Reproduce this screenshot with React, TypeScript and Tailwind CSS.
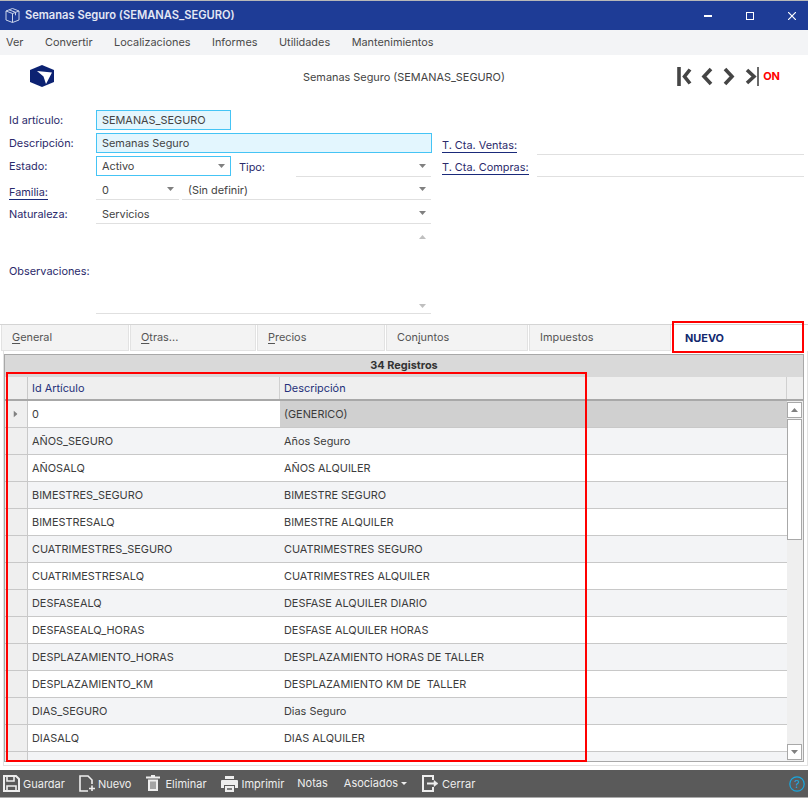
import React from "react";

// Rows of the articles grid
const rows: [string, string][] = [
  ["0", "(GENERICO)"],
  ["AÑOS_SEGURO", "Años Seguro"],
  ["AÑOSALQ", "AÑOS ALQUILER"],
  ["BIMESTRES_SEGURO", "BIMESTRE SEGURO"],
  ["BIMESTRESALQ", "BIMESTRE ALQUILER"],
  ["CUATRIMESTRES_SEGURO", "CUATRIMESTRES SEGURO"],
  ["CUATRIMESTRESALQ", "CUATRIMESTRES ALQUILER"],
  ["DESFASEALQ", "DESFASE ALQUILER DIARIO"],
  ["DESFASEALQ_HORAS", "DESFASE ALQUILER HORAS"],
  ["DESPLAZAMIENTO_HORAS", "DESPLAZAMIENTO HORAS DE TALLER"],
  ["DESPLAZAMIENTO_KM", "DESPLAZAMIENTO KM DE  TALLER"],
  ["DIAS_SEGURO", "Dias Seguro"],
  ["DIASALQ", "DIAS ALQUILER"],
];

const menu = ["Ver", "Convertir", "Localizaciones", "Informes", "Utilidades", "Mantenimientos"];

const Caret = ({ className = "" }: { className?: string }) => (
  <svg width="7" height="4" viewBox="0 0 7 4" className={className}>
    <path d="M0 0h7L3.5 4z" fill="#808080" />
  </svg>
);

// Borderless select with a grey underline
const Select = ({ value, className }: { value?: string; className: string }) => (
  <div className={`flex h-[21px] items-center justify-between border-b border-[#e0e0e0] pl-[6px] pr-[5px] pt-[2px] ${className}`}>
    <span>{value}</span>
    <Caret className="-mt-[2px]" />
  </div>
);

const Label = ({ children, link }: { children: React.ReactNode; link?: boolean }) => (
  <span className={`text-[#2b2a6b] ${link ? "border-b border-[#1a2a7a] leading-[13px]" : ""}`}>{children}</span>
);

const Tab = ({ width, children }: { width: string; children: React.ReactNode }) => (
  <div className={`flex h-[26px] items-center border-x border-b border-[#e2e2e2] bg-[#f3f3f3] pl-[10px] text-[#555] ${width}`}>{children}</div>
);

const ToolButton = ({ icon, label, className }: { icon?: React.ReactNode; label: string; className: string }) => (
  <div className={`flex items-center text-[#eeeeee] ${className}`}>
    {icon}
    <span className="pt-[2px]">{label}</span>
  </div>
);

export default function App() {
  return (
    <div className="relative flex h-[798px] w-[808px] flex-col overflow-hidden bg-white font-['Inter',sans-serif] text-[10.9px] text-[#444]">
      {/* Title bar */}
      <div className="h-px bg-[#b8b8b8]" />
      <div className="flex h-[29px] items-center bg-[#1e3c96] pl-[4px] text-white">
        <svg width="17" height="17" viewBox="0 0 17 17" fill="none" stroke="#c9d3ea" strokeWidth="1">
          <path d="M8.5 1.5l6.5 2.5v9l-6.5 2.5L2 13V4z" />
          <path d="M2 4l6.5 2.5L15 4M8.5 6.5v9M5 2.8l6.5 2.5v3" />
        </svg>
        <span className="ml-[4px] text-[11.15px] font-semibold text-[#e4e8f4]">Semanas Seguro (SEMANAS_SEGURO)</span>
        <div className="ml-auto flex items-center">
          <div className="h-[2px] w-[8px] bg-white" />
          <div className="ml-[34px] h-[8px] w-[8px] border border-white" />
          <svg width="8" height="8" viewBox="0 0 8 8" className="ml-[34px] mr-[12px]" stroke="white" strokeWidth="1.2">
            <path d="M0 0l8 8M8 0L0 8" />
          </svg>
        </div>
      </div>

      {/* Menu */}
      <div className="flex h-[25px] items-center gap-[21.5px] bg-[#f3f4f6] pl-[6px] text-[#4a4a4a]">
        {menu.map((m) => (
          <span key={m}>{m}</span>
        ))}
      </div>

      {/* Header with logo and navigation */}
      <div className="flex h-[55px] items-start">
        <svg width="24" height="22" viewBox="0 0 24 22" className="ml-[30px] mt-[10px]">
          <path d="M12 0L24 5v12l-12 5L0 17V5z" fill="#0c2272" />
          <path d="M7 6L22 7.5 16 19 13.5 11.5z" fill="white" />
        </svg>
        <span className="ml-[249px] mt-[14px]">Semanas Seguro (SEMANAS_SEGURO)</span>
        <div className="ml-auto mr-[28px] mt-[12px] flex items-center">
          <svg width="84" height="20" viewBox="0 0 84 20" fill="none" stroke="#454545" strokeWidth="3.6">
            <path d="M2 0v19" />
            <path d="M13 2.5L7.5 9.5l5.5 7M34 2L27 9.5l7 7.5M48 2l7 7.5-7 7.5M70 3l7 6.5-7 6.5" />
            <path d="M81 0v19" strokeWidth="1.6" />
          </svg>
          <span className="mb-[2px] ml-[2px] text-[11px] font-bold text-[#ff0000]">ON</span>
        </div>
      </div>

      {/* Form */}
      <div className="flex h-[214px]">
        <div className="flex w-[432px] flex-col pl-[9px]">
          <div className="flex h-[20px] items-center">
            <div className="w-[87px]"><Label>Id artículo:</Label></div>
            <div className="flex h-[20px] w-[135px] items-center border border-[#45c4f5] bg-[#e3f6fe] pl-[5px]">SEMANAS_SEGURO</div>
          </div>
          <div className="mt-[3px] flex h-[20px] items-center">
            <div className="w-[87px]"><Label>Descripción:</Label></div>
            <div className="flex h-[20px] w-[336px] items-center border border-[#45c4f5] bg-[#e3f6fe] pl-[5px]">Semanas Seguro</div>
          </div>
          <div className="mt-[3px] flex h-[21px] items-start">
            <div className="w-[87px] pt-[2px]"><Label>Estado:</Label></div>
            <div className="flex h-[20px] w-[135px] items-center justify-between border border-[#45c4f5] pl-[5px] pr-[5px]">
              <span>Activo</span>
              <Caret />
            </div>
            <div className="ml-[8px] w-[57px] pt-[3px]"><Label>Tipo:</Label></div>
            <Select className="w-[135px]" />
          </div>
          <div className="mt-[2px] flex h-[21px] items-center">
            <div className="w-[87px] pt-[6px]"><Label link>Familia:</Label></div>
            <Select value="0" className="w-[83px]" />
            <Select value="(Sin definir)" className="ml-[3px] w-[249px]" />
          </div>
          <div className="mt-[3px] flex h-[21px] items-center">
            <div className="w-[87px] pt-[2px]"><Label>Naturaleza:</Label></div>
            <Select value="Servicios" className="w-[335px]" />
          </div>
          <div className="flex h-[90px]">
            <div className="w-[87px] pt-[39px]"><Label>Observaciones:</Label></div>
            <div className="flex w-[335px] flex-col items-end justify-between border-b border-[#e0e0e0] pb-[5px] pr-[5px] pt-[11px]">
              <Caret className="rotate-180 opacity-50" />
              <Caret className="opacity-50" />
            </div>
          </div>
        </div>
        <div className="ml-[10px] flex flex-1 flex-col pt-[23px]">
          <div className="flex h-[22px] items-end">
            <div className="w-[95px] pb-[2px]"><Label link>T. Cta. Ventas:</Label></div>
            <div className="w-[267px] border-b border-[#e0e0e0]" />
          </div>
          <div className="flex h-[22px] items-end">
            <div className="w-[95px] pb-[2px]"><Label link>T. Cta. Compras:</Label></div>
            <div className="w-[267px] border-b border-[#e0e0e0]" />
          </div>
        </div>
      </div>

      {/* Tabs */}
      <div className="flex gap-px border-t border-[#d4d4d4] pl-[1px]">
        <Tab width="w-[128px]"><span className="underline underline-offset-2">G</span>eneral</Tab>
        <Tab width="w-[126px]"><span className="underline underline-offset-2">O</span>tras...</Tab>
        <Tab width="w-[128px]"><span className="underline underline-offset-2">P</span>recios</Tab>
        <Tab width="w-[142px]">Con<span className="underline underline-offset-2">j</span>untos</Tab>
        <Tab width="w-[142px]">Impuestos</Tab>
        <div className="flex h-[26px] flex-1 items-center bg-white pl-[13px] font-bold text-[#12296f]">NUEVO</div>
      </div>

      {/* Grid panel */}
      <div className="ml-[3px] h-[415px] border-x border-b border-[#e2e2e2] pr-[3px] pt-[3px]">
        <div className="flex h-[408px] flex-col border border-[#a8a8a8]">
          <div className="flex h-[22px] items-center justify-center bg-[#d9d9d9] pb-[1px] font-bold text-[#333]">34 Registros</div>
          <div className="flex h-[24px] border-b-2 border-[#a8a8a8] bg-[#efefef] text-[#24307a]">
            <div className="w-[23px] border-r border-[#c9c9c9]" />
            <div className="flex w-[252px] items-center border-r border-[#d0d0d0] pl-[4px]">Id Artículo</div>
            <div className="flex w-[507px] items-center border-r border-[#d0d0d0] pl-[4px]">Descripción</div>
            <div className="flex-1" />
          </div>
          <div className="flex min-h-0 flex-1 overflow-hidden">
            <div className="min-w-0 flex-1 overflow-hidden text-[#3c3c3c]">
              {rows.map(([id, desc], i) => (
                <div key={id} className={`flex h-[27px] border-b border-[#c8c8c8] ${i % 2 === 1 ? "bg-[#f3f4f6]" : "bg-white"}`}>
                  <div className="flex w-[23px] items-center justify-center border-r border-[#c9c9c9] bg-[#efefef] pr-[1px]">
                    {i === 0 && <Caret className="-rotate-90" />}
                  </div>
                  <div className="flex w-[252px] items-center pl-[4px]">{id}</div>
                  <div className={`flex flex-1 items-center whitespace-pre pl-[4px] ${i === 0 ? "bg-[#d0d0d0]" : ""}`}>{desc}</div>
                </div>
              ))}
              <div className="flex h-[27px] bg-[#f3f4f6]">
                <div className="w-[23px] border-r border-[#c9c9c9] bg-[#efefef]" />
              </div>
            </div>
            {/* Scrollbar */}
            <div className="flex w-[16px] flex-col items-start bg-[#efefef] pt-[1px]">
              <div className="flex h-[16px] w-[15px] items-center justify-center border border-[#a8a8a8] bg-white">
                <Caret className="rotate-180" />
              </div>
              <div className="mt-[1px] h-[121px] w-[15px] border border-[#a8a8a8] bg-white" />
              <div className="mt-auto mb-[1px] flex h-[16px] w-[15px] items-center justify-center border border-[#a8a8a8] bg-white">
                <Caret />
              </div>
            </div>
          </div>
        </div>
      </div>

      {/* Bottom toolbar */}
      <div className="mt-[4px] flex h-[27px] items-center bg-[#5a5a5a] text-[11px] shadow-[0_1px_1px_#aaa]">
        <ToolButton
          className="ml-[3px]"
          label="Guardar"
          icon={
            <svg width="17" height="17" viewBox="0 0 17 17" fill="none" stroke="#eee" strokeWidth="2" className="mr-[3px]">
              <path d="M1 1v15h15V4l-3-3z" />
              <path d="M4 1v5h7V1" strokeWidth="1.6" />
              <path d="M4 16v-5h9v5" strokeWidth="1.6" />
            </svg>
          }
        />
        <ToolButton
          className="ml-[14px]"
          label="Nuevo"
          icon={
            <svg width="17" height="17" viewBox="0 0 17 17" fill="none" stroke="#eee" strokeWidth="1.6" className="mr-[2px]">
              <path d="M9 16H1V1h8l4 4v4" />
              <path d="M13 10.5v5.5M10 13.5h6" />
            </svg>
          }
        />
        <ToolButton
          className="ml-[15px]"
          label="Eliminar"
          icon={
            <svg width="14" height="17" viewBox="0 0 14 17" fill="none" className="mr-[5px]">
              <path d="M0 2.5h14" stroke="#eee" strokeWidth="2" />
              <path d="M5 1h4" stroke="#eee" strokeWidth="2" />
              <path d="M2 4.5h10V16H2z" fill="#eee" />
              <path d="M5 6.5v7.5M7 6.5v7.5M9 6.5v7.5" stroke="#5a5a5a" strokeWidth="1" />
            </svg>
          }
        />
        <ToolButton
          className="ml-[14px]"
          label="Imprimir"
          icon={
            <svg width="17" height="16" viewBox="0 0 17 16" className="mr-[4px]">
              <path d="M4 0h9v3H4zM1 4h15a1 1 0 011 1v7h-3V9H3v3H0V5a1 1 0 011-1z" fill="#eee" />
              <path d="M4 10h9v6H4z" fill="#eee" />
              <path d="M6 13h5" stroke="#5a5a5a" strokeWidth="1.5" />
            </svg>
          }
        />
        <ToolButton className="ml-[13px] pb-[2px]" label="Notas" />
        <div className="ml-[16px] flex items-center pb-[1px] text-[#eee]">
          <span>Asociados</span>
          <svg width="6" height="3" viewBox="0 0 6 3" className="ml-[3px]"><path d="M0 0h6L3 3z" fill="#eee" /></svg>
        </div>
        <ToolButton
          className="ml-[15px]"
          label="Cerrar"
          icon={
            <svg width="17" height="17" viewBox="0 0 17 17" fill="none" stroke="#eee" strokeWidth="2" className="mr-[3px]">
              <path d="M11 5V1H1v15h10v-4" />
              <path d="M5 8.5h9" />
              <path d="M12 5.5l4 3-4 3z" fill="#eee" strokeWidth="0.5" />
            </svg>
          }
        />
        <svg width="16" height="16" viewBox="0 0 16 16" fill="none" className="ml-auto mr-[3px]">
          <circle cx="8" cy="8" r="7.2" stroke="#18a8e0" strokeWidth="1.2" />
          <text x="8" y="12" textAnchor="middle" fontSize="11" fill="#18a8e0" fontFamily="Inter">?</text>
        </svg>
      </div>

      {/* Red annotation boxes */}
      <div className="absolute left-[672px] top-[321px] h-[32px] w-[132px] border-2 border-[#ff0000]" />
      <div className="absolute left-[6px] top-[372px] h-[390px] w-[581px] border-2 border-[#ff0000]" />
    </div>
  );
}
